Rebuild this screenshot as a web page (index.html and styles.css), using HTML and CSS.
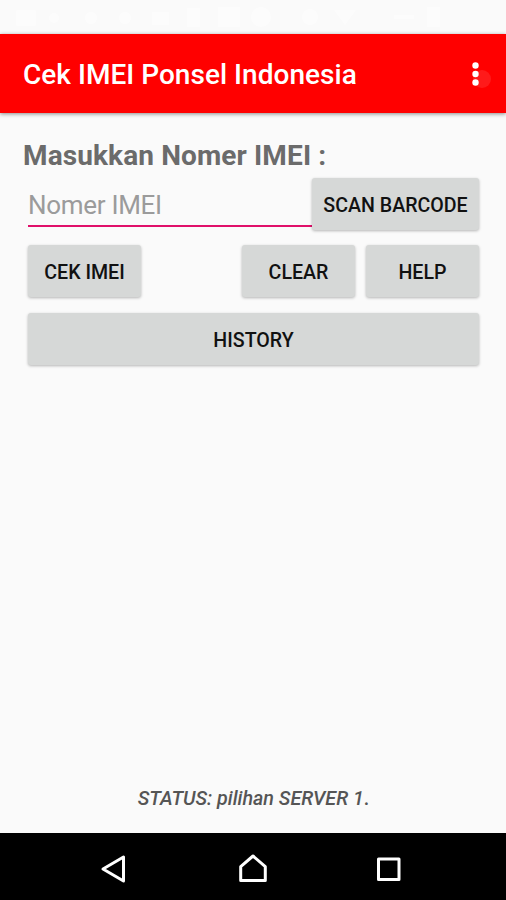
FILE: index.html
```html
<!DOCTYPE html>
<html lang="id">
<head>
<meta charset="utf-8">
<title>Cek IMEI Ponsel Indonesia</title>
<link rel="stylesheet" href="styles.css">
</head>
<body>
<div class="status-bar">
  <svg width="506" height="34" viewBox="0 0 506 34" fill="#fff">
    <rect x="16" y="10" width="20" height="16" rx="2"/><circle cx="54" cy="18" r="5"/><circle cx="91" cy="18" r="6"/><circle cx="125" cy="18" r="6"/><rect x="152" y="12" width="17" height="13"/><rect x="187" y="8" width="13" height="19"/><rect x="218" y="7" width="22" height="20"/><circle cx="261" cy="17" r="10"/><circle cx="310" cy="17" r="8"/><path d="M334 10h22l-11 15z"/><rect x="394" y="15" width="20" height="4"/><rect x="427" y="7" width="13" height="20"/>
  </svg>
</div>
<header class="app-bar">
  <h1 class="title">Cek IMEI Ponsel Indonesia</h1>
  <svg class="more" width="30" height="40" viewBox="0 0 30 40">
    <circle cx="18" cy="25" r="9" fill="#ff1a1a"/>
    <g fill="#fff"><circle cx="11.5" cy="11.5" r="3.2"/><circle cx="11.5" cy="20" r="3.2"/><circle cx="11.5" cy="28.5" r="3.2"/></g>
  </svg>
</header>
<main class="content">
  <label class="label" for="imei">Masukkan Nomer IMEI :</label>
  <div class="entry">
    <input class="field" id="imei" type="text" placeholder="Nomer IMEI">
    <button class="btn scan">SCAN BARCODE</button>
  </div>
  <div class="actions">
    <button class="btn small check">CEK IMEI</button>
    <button class="btn small">CLEAR</button>
    <button class="btn small">HELP</button>
  </div>
  <button class="btn history">HISTORY</button>
  <p class="status"><em>STATUS: pilihan SERVER 1</em>.</p>
</main>
<nav class="nav-bar">
  <svg width="30" height="32" viewBox="0 0 30 32"><path d="M25.5 4v24L5 16z"/></svg>
  <svg class="home" width="30" height="32" viewBox="0 0 30 32"><path d="M2.7 27.6V13.7L15 3l12.3 10.7v13.9z"/></svg>
  <svg width="30" height="32" viewBox="0 0 30 32"><rect x="4.5" y="6" width="20.5" height="20.5"/></svg>
</nav>
</body>
</html>
```
FILE: styles.css
```css
* { box-sizing: border-box; }
body {
  margin: 0;
  width: 506px;
  height: 900px;
  display: flex;
  flex-direction: column;
  overflow: hidden;
  background: #fafafa;
  font-family: Roboto, sans-serif;
}
.status-bar { height: 34px; flex: none; }
.status-bar svg { display: block; opacity: .5; }
.app-bar {
  height: 79px;
  flex: none;
  display: flex;
  align-items: center;
  justify-content: space-between;
  padding: 0 15px 0 23px;
  background: #f00;
  box-shadow: 0 1px 4px rgba(0, 0, 0, .45);
}
.title {
  margin: 2px 0 0;
  font-size: 28px;
  font-weight: 500;
  line-height: 34px;
  letter-spacing: .03px;
  color: #fff;
  white-space: nowrap;
}
.more { margin-right: -3px; }
.content {
  flex: 1;
  display: flex;
  flex-direction: column;
  padding: 26px 27px 0 28px;
}
.label {
  margin-left: -5px;
  font-size: 28px;
  font-weight: 700;
  line-height: 34px;
  letter-spacing: .12px;
  color: #6b6b6b;
}
.entry { display: flex; margin-top: 5px; }
.field {
  flex: 1;
  min-width: 0;
  height: 49px;
  margin: 0;
  padding: 7px 0 0;
  border: 0;
  border-bottom: 2px solid #e0106a;
  background: none;
  outline: 0;
  font: 400 26px Roboto, sans-serif;
  letter-spacing: -.3px;
}
.field::placeholder { color: #9b9b9b; opacity: 1; }
.btn {
  height: 52px;
  padding: 2px 0 0;
  border: 0;
  border-radius: 3px;
  background: #d6d8d7;
  box-shadow: 0 1px 3px rgba(0, 0, 0, .28);
  font: 500 19.6px Roboto, sans-serif;
  color: #111;
  white-space: nowrap;
}
.scan { width: 167px; }
.actions { display: flex; gap: 11px; margin-top: 15px; }
.small { width: 113px; }
.check { margin-right: auto; }
.history { margin-top: 16px; }
.status {
  margin: auto 0 22px;
  font-size: 19.7px;
  font-weight: 500;
  line-height: 24px;
  text-align: center;
  color: #555;
}
.nav-bar {
  height: 67px;
  flex: none;
  display: flex;
  justify-content: space-between;
  align-items: center;
  padding: 4px 102px 0 98px;
  background: #000;
}
.nav-bar svg { fill: none; stroke: #fff; stroke-width: 3; stroke-linejoin: round; }
.nav-bar .home { margin-left: 4px; }
```
